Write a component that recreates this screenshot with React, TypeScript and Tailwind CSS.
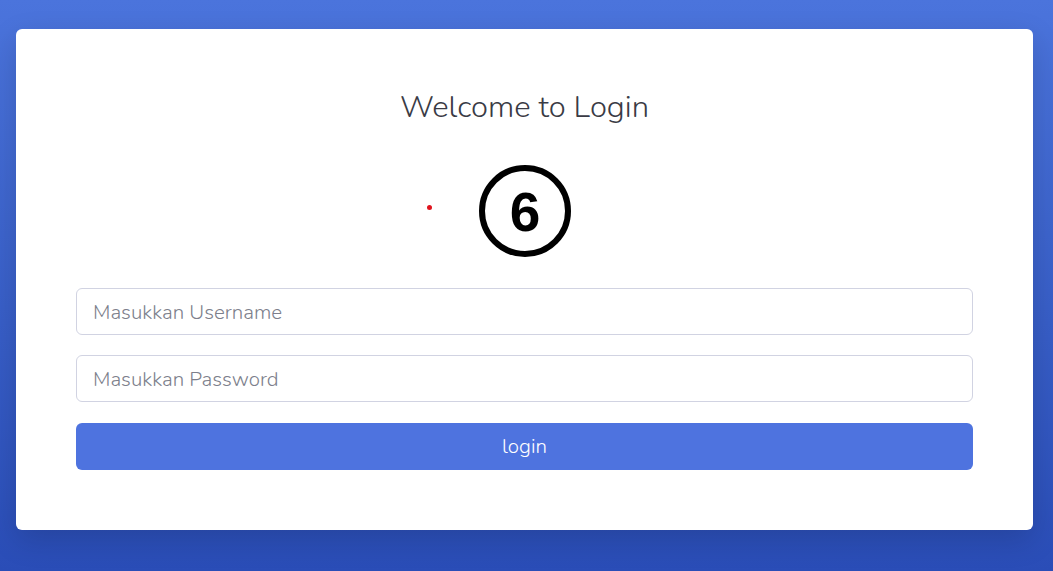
export default function App() {
  return (
    <div className="min-h-screen w-full bg-gradient-to-b from-[#4b74dc] to-[#2a4db7] pt-[29px] pl-4 pr-5 pb-10 font-['Nunito','Lato','Noto_Sans',sans-serif]">
      <div className="bg-white rounded-md h-[501px] px-[60px] pt-[58px] flex flex-col shadow-[0_10px_30px_rgba(0,0,0,0.15)]">
        <h1 className="text-center text-[31px] leading-[40px] text-[#3a3b45] font-light">
          Welcome to Login
        </h1>

        <div className="relative flex justify-center mt-[37px] h-[94px]">
          <span className="absolute left-[351px] top-[41px] w-[5px] h-[5px] rounded-full bg-[#e0141e]" />
          <svg width="94" height="94" viewBox="0 0 94 94">
            <circle cx="47" cy="47" r="43" fill="none" stroke="#000" strokeWidth="6" />
            <text
              x="47"
              y="67"
              textAnchor="middle"
              fontFamily="'Liberation Sans', Arial, sans-serif"
              fontWeight="700"
              fontSize="55"
              fill="#000"
            >
              6
            </text>
          </svg>
        </div>

        <form className="flex flex-col mt-[30px]">
          <input
            type="text"
            placeholder="Masukkan Username"
            className="h-[47px] w-full rounded-md border border-[#d1d3e2] px-4 text-[20.5px] font-light text-[#6e707e] placeholder:text-[#7d7f8c] outline-none"
          />
          <input
            type="password"
            placeholder="Masukkan Password"
            className="h-[47px] w-full mt-[20px] rounded-md border border-[#d1d3e2] px-4 text-[20.5px] font-light text-[#6e707e] placeholder:text-[#7d7f8c] outline-none"
          />
          <button
            type="button"
            className="h-[47px] w-full mt-[21px] rounded-md bg-[#4e73df] text-white text-[20.5px] font-light"
          >
            login
          </button>
        </form>
      </div>
    </div>
  );
}
